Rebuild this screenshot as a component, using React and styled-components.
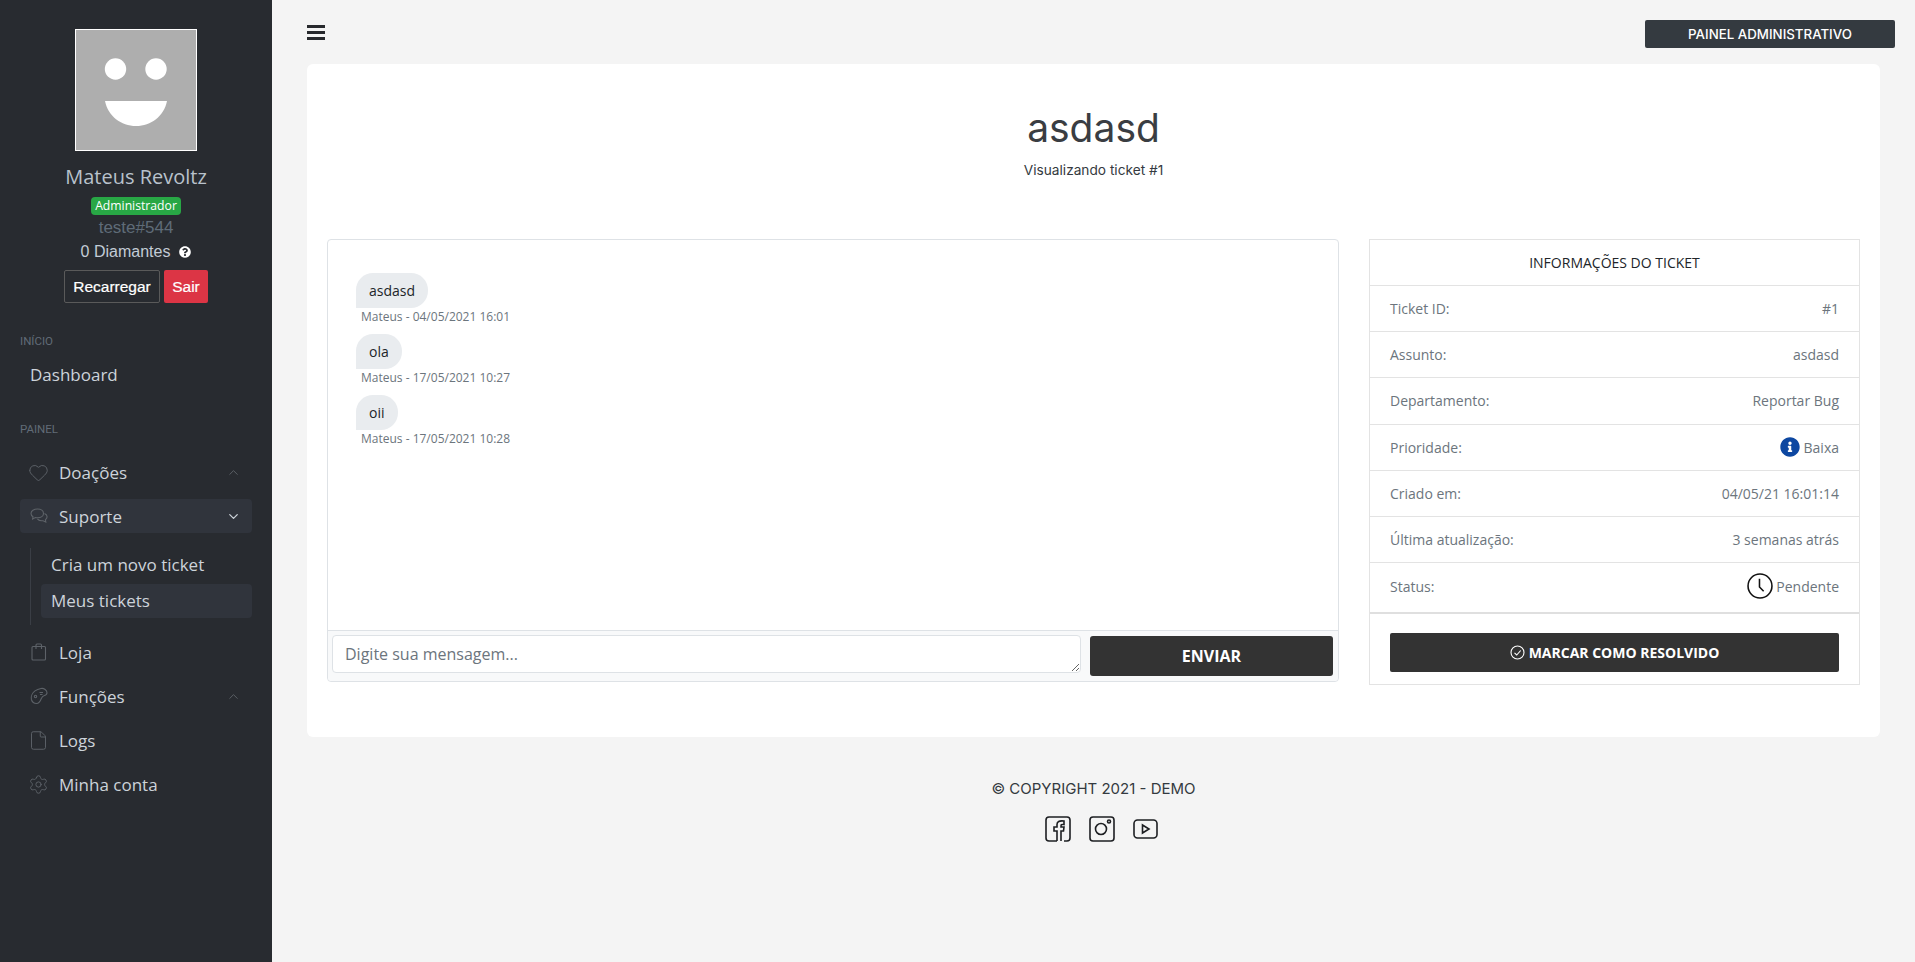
import React from "react"
import styled, { createGlobalStyle } from "styled-components"
import { Heart, File, Settings, ChevronUp, ChevronDown } from "lucide-react"
import { FaInfoCircle, FaQuestionCircle } from "react-icons/fa"

const Global = createGlobalStyle`
    html, body { margin: 0; padding: 0; height: 100%; background: #f4f4f4; overflow: hidden; }
    * { box-sizing: border-box; }
    body { font-family: "Open Sans", sans-serif; }
`;

const Layout = styled.div`
    display: flex;
    height: 962px;
`;

const Sidebar = styled.aside`
    width: 272px;
    flex: none;
    background-color: #282b30;
    padding: 29px 20px 0;
`;

const Profile = styled.div`
    display: flex;
    flex-direction: column;
    align-items: center;
`;

const Avatar = styled.div`
    width: 122px;
    height: 122px;
    background-color: #aeaeae;
    border: 1px solid #fff;
    display: flex;
`;

const Name = styled.div`
    margin-top: 13px;
    height: 26px;
    line-height: 26px;
    font-size: 20px;
    color: #b9c2cc;
`;

const Badge = styled.span`
    margin-top: 7px;
    height: 18px;
    line-height: 18px;
    width: 90px;
    text-align: center;
    background-color: #28a745;
    color: #fff;
    border-radius: 4px;
    font-size: 12.2px;
`;

const Tag = styled.div`
    margin-top: 3px;
    height: 20px;
    line-height: 20px;
    font-family: "Liberation Sans", sans-serif;
    font-size: 17px;
    color: #5f6b78;
`;

const Diamonds = styled.div`
    margin-top: 4px;
    height: 20px;
    display: flex;
    align-items: center;
    gap: 9px;
    font-family: "Liberation Sans", sans-serif;
    font-size: 16px;
    color: #c3ccd6;
`;

const Actions = styled.div`
    margin-top: 8px;
    display: flex;
    gap: 4px;
`;

const ActionButton = styled.button`
    height: 33px;
    padding: 0;
    width: ${p => p.$danger ? "44px" : "96px"};
    background-color: ${p => p.$danger ? "#dc3545" : "transparent"};
    border: ${p => p.$danger ? "none" : "1px solid #5a5a5a"};
    border-radius: 2px;
    color: #fff;
    font-family: "Liberation Sans", sans-serif;
    font-size: 15.500px;
    -webkit-text-stroke: 0.2px #fff;
`;

const Section = styled.div`
    margin-top: ${p => p.$top};
    margin-bottom: ${p => p.$after};
    height: 16px;
    line-height: 16px;
    font-family: Roboto, sans-serif;
    font-size: 11.5px;
    color: #616b77;
`;

const NavRow = styled.div`
    height: 34px;
    margin-top: 10px;
    padding: 0 10px;
    display: flex;
    align-items: center;
    font-size: 17px;
    color: #cdd3da;
    border-radius: 4px;
    background-color: ${p => p.$active ? "#30343c" : "transparent"};
`;

const NavIcon = styled.span`
    width: 29px;
    flex: none;
    display: flex;
    color: #5d6268;
    svg { margin-left: ${p => p.$pull ? "-2px" : "0"}; }
`;

const NavText = styled.span`
    flex: 1;
`;

const NavArrow = styled.span`
    display: flex;
    margin-right: 1px;
    color: ${p => p.$open ? "#cdd3da" : "#5d6268"};
`;

const SubMenu = styled.div`
    margin: 15px 0 0 10px;
    padding-left: 10px;
    height: 77px;
    border-left: 1px solid #3a3e45;
`;

const SubItem = styled.div`
    height: 34px;
    line-height: 34px;
    margin-bottom: 2px;
    padding-left: 10px;
    font-size: 17px;
    color: #cdd3da;
    border-radius: 4px;
    background-color: ${p => p.$active ? "#30343c" : "transparent"};
`;

const Main = styled.main`
    flex: 1;
    min-width: 0;
    padding: 0 20px 0 35px;
`;

const Topbar = styled.div`
    height: 64px;
    padding-top: 20px;
    display: flex;
    justify-content: space-between;
    align-items: flex-start;
`;

const Burger = styled.div`
    width: 18px;
    margin-top: 5px;
    display: flex;
    flex-direction: column;
    gap: 3px;
`;

const BurgerLine = styled.span`
    height: 3px;
    background-color: #27292d;
`;

const AdminButton = styled.button`
    width: 250px;
    height: 28px;
    padding: 0;
    border: none;
    border-radius: 2px;
    background-color: #343a40;
    color: #fff;
    font-family: Inter, sans-serif;
    font-size: 13.300px;
    font-weight: 500;
`;

const Card = styled.section`
    margin-right: 15px;
    padding: 0 20px 52px;
    background-color: #fff;
    border-radius: 6px;
`;

const Header = styled.header`
    height: 175px;
    padding-top: 40px;
    text-align: center;
`;

const Title = styled.h1`
    margin: 0;
    height: 48px;
    line-height: 48px;
    font-family: Inter, sans-serif;
    font-size: 39px;
    font-weight: 400;
    color: #3a3d42;
`;

const Subtitle = styled.div`
    margin-top: 8px;
    font-family: Inter, sans-serif;
    font-size: 13.700px;
    line-height: 20px;
    color: #343a40;
`;

const Columns = styled.div`
    display: flex;
    gap: 30px;
    align-items: flex-start;
`;

const ChatBox = styled.div`
    width: 1012px;
    flex: none;
    height: 443px;
    display: flex;
    flex-direction: column;
    border: 1px solid #dee2e6;
    border-radius: 4px;
`;

const Messages = styled.div`
    flex: 1;
    padding: 33px 28px 0;
`;

const Message = styled.div`
    margin-bottom: 9px;
`;

const Bubble = styled.div`
    display: inline-block;
    height: 35px;
    line-height: 35px;
    padding: 0 13px;
    background-color: #e9ecef;
    border-radius: 17px 17px 17px 0;
    font-size: 14px;
    color: #212529;
`;

const Meta = styled.div`
    margin-top: 1px;
    padding-left: 5px;
    font-size: 12px;
    line-height: 16px;
    color: #6c757d;
`;

const Composer = styled.div`
    height: 51px;
    padding: 4px 5px 4px 4px;
    display: flex;
    gap: 9px;
    background-color: #f8f9fa;
    border-top: 1px solid #dee2e6;
    border-radius: 0 0 4px 4px;
`;

const MessageInput = styled.textarea`
    flex: 1;
    height: 38px;
    padding: 6px 12px;
    border: 1px solid #dee2e6;
    border-radius: 4px;
    background-color: #fff;
    font-family: "Open Sans", sans-serif;
    font-size: 16px;
    line-height: 24px;
    color: #495057;
    &::placeholder { color: #6c757d; opacity: 1; }
`;

const SendButton = styled.button`
    width: 243px;
    height: 40px;
    margin-top: 1px;
    border: none;
    border-radius: 3px;
    background-color: #333;
    color: #fff;
    font-family: "Open Sans", sans-serif;
    font-size: 16px;
    font-weight: 700;
`;

const InfoBox = styled.div`
    flex: 1;
    height: 446px;
    border: 1px solid #e3e3e3;
`;

const InfoHead = styled.div`
    height: 46px;
    line-height: 46px;
    text-align: center;
    font-size: 14px;
    color: #212529;
    border-bottom: 1px solid #e3e3e3;
`;

const InfoRow = styled.div`
    height: ${p => p.$last ? "51px" : "46.200px"};
    padding: ${p => p.$last ? "0 20px 3px" : "0 20px"};
    display: flex;
    justify-content: space-between;
    align-items: center;
    font-size: 14px;
    color: #6c757d;
    border-bottom: ${p => p.$last ? "2px solid #dfdfdf" : "1px solid #e3e3e3"};
`;

const InfoValue = styled.span`
    display: flex;
    align-items: center;
    gap: ${p => p.$gap || "4px"};
`;

const InfoFoot = styled.div`
    padding: 19px 20px 0;
`;

const ResolveButton = styled.button`
    width: 100%;
    height: 39px;
    display: flex;
    align-items: center;
    justify-content: center;
    gap: 4px;
    border: none;
    border-radius: 2px;
    background-color: #333;
    color: #fff;
    font-family: "Open Sans", sans-serif;
    font-size: 14px;
    font-weight: 700;
`;

const Footer = styled.footer`
    margin-right: 15px;
    padding-top: 42px;
    display: flex;
    flex-direction: column;
    align-items: center;
`;

const Copyright = styled.div`
    font-family: Inter, sans-serif;
    font-size: 15px;
    line-height: 20px;
    color: #343a40;
`;

const Socials = styled.div`
    margin-top: 17px;
    margin-left: 15px;
    display: flex;
    align-items: center;
    gap: 18px;
`;

const Face = () => (
    <svg width="120" height="120" viewBox="0 0 120 120">
        <circle cx="39.5" cy="39" r="10.7" fill="#fff" />
        <circle cx="80" cy="39" r="10.7" fill="#fff" />
        <path d="M29 71h62c-3 15-16 25-31 25s-28-10-31-25z" fill="#fff" />
    </svg>
);

const ChatIcon = () => (
    <svg width="18" height="18" viewBox="0 0 18 18" fill="none" stroke="currentColor" strokeWidth="1.1">
        <path d="M7.5 2C4 2 1 3.8 1 6.4c0 1.5 1 2.6 2 3.3L2.6 12l2.8-1.5c.7.1 1.4.2 2.1.2 3.5 0 6-1.9 6-4.3S11 2 7.5 2z" />
        <path d="M14.5 6.5c1.6.7 2.6 1.9 2.6 3.3 0 1.2-.7 2.2-1.7 2.9l.4 2.3-2.8-1.3c-2.2.3-4.4-.4-5.6-1.9" />
    </svg>
);

const BagIcon = () => (
    <svg width="18" height="18" viewBox="0 0 18 18" fill="none" stroke="currentColor" strokeWidth="1.1">
        <rect x="2" y="3.5" width="13.5" height="13.5" rx="1" />
        <path d="M6 6V2a1 1 0 0 1 1-1h3.500a1 1 0 0 1 1 1v4" />
    </svg>
);

const PadIcon = () => (
    <svg width="18" height="18" viewBox="0 0 18 18" fill="none" stroke="currentColor" strokeWidth="1.1">
        <path d="M11 1.500c3-.6 6 1.700 6 4.200 0 1.600-1 2.400-2.600 2.800-1.800.5-2.400 1.200-3.200 3.200-.9 2.500-2 4.800-4.700 4.800-2.600 0-4.500-2-5.100-4C.6 9.500 2.600 5.800 5 3.900 7 2.500 9 1.900 11 1.500z" />
        <path d="M9.500 5.500h3.500M10 7.500h2.500" />
        <circle cx="5.500" cy="9.500" r="1.200" />
    </svg>
);

const ClockIcon = () => (
    <svg width="26" height="26" viewBox="0 0 25 25" fill="none" stroke="#111" strokeWidth="1.5">
        <circle cx="12.500" cy="12.500" r="11.500" />
        <path d="M12 5.500v8l4 4" />
    </svg>
);

const CheckIcon = () => (
    <svg width="15" height="15" viewBox="0 0 15 15" fill="none" stroke="#fff" strokeWidth="1.1">
        <circle cx="7.500" cy="7.500" r="6.500" />
        <path d="M4.500 7.800l2.200 2.200 4-4.500" />
    </svg>
);

const FacebookIcon = () => (
    <svg width="26" height="26" viewBox="0 0 26 26" fill="none" stroke="#1d1f22" strokeWidth="1.600">
        <path d="M12 25H4a3 3 0 0 1-3-3V4a3 3 0 0 1 3-3h18a3 3 0 0 1 3 3v18a3 3 0 0 1-3 3h-3" />
        <path d="M12 25V15H9v-4h3V8.500C12 5.500 14 4.500 19 5v3.500c-3-.3-3 0-3 2.500h3l-.5 4H16v10" />
    </svg>
);

const InstagramIcon = () => (
    <svg width="26" height="26" viewBox="0 0 26 26" fill="none" stroke="#1d1f22" strokeWidth="1.600">
        <rect x="1" y="1" width="24" height="24" rx="3" />
        <circle cx="12" cy="13" r="5.500" />
        <circle cx="20" cy="5.500" r="1.500" />
    </svg>
);

const YoutubeIcon = () => (
    <svg width="25" height="20" viewBox="0 0 25 20" fill="none" stroke="#1d1f22" strokeWidth="1.600">
        <rect x="1" y="1" width="23" height="18" rx="3.500" />
        <path d="M9.500 6v8l6.500-4z" />
    </svg>
);

const MenuItem = ({ icon, label, arrow, active, pull }) => (
    <NavRow $active={active}>
        <NavIcon $pull={pull}>{icon}</NavIcon>
        <NavText>{label}</NavText>
        {arrow === "up" && <NavArrow><ChevronUp size={15} strokeWidth={1.5} /></NavArrow>}
        {arrow === "down" && <NavArrow $open><ChevronDown size={15} strokeWidth={2} /></NavArrow>}
    </NavRow>
);

const messages = [
    { text: "asdasd", meta: "Mateus - 04/05/2021 16:01" },
    { text: "ola", meta: "Mateus - 17/05/2021 10:27" },
    { text: "oii", meta: "Mateus - 17/05/2021 10:28" },
];

const App = () => {
    return (
        <Layout>
            <Global />
            <Sidebar>
                <Profile>
                    <Avatar><Face /></Avatar>
                    <Name>Mateus Revoltz</Name>
                    <Badge>Administrador</Badge>
                    <Tag>teste#544</Tag>
                    <Diamonds>0 Diamantes <FaQuestionCircle size={12} color="#fff" /></Diamonds>
                    <Actions>
                        <ActionButton>Recarregar</ActionButton>
                        <ActionButton $danger>Sair</ActionButton>
                    </Actions>
                </Profile>
                <Section $top="30px" $after="-2px">INÍCIO</Section>
                <NavRow>Dashboard</NavRow>
                <Section $top="30px" $after="18px">PAINEL</Section>
                <MenuItem pull icon={<Heart size={21} strokeWidth={1.1} />} label="Doações" arrow="up" />
                <MenuItem icon={<ChatIcon />} label="Suporte" arrow="down" active />
                <SubMenu>
                    <SubItem>Cria um novo ticket</SubItem>
                    <SubItem $active>Meus tickets</SubItem>
                </SubMenu>
                <MenuItem icon={<BagIcon />} label="Loja" />
                <MenuItem icon={<PadIcon />} label="Funções" arrow="up" />
                <MenuItem pull icon={<File size={21} strokeWidth={1.1} />} label="Logs" />
                <MenuItem pull icon={<Settings size={21} strokeWidth={1.1} />} label="Minha conta" />
            </Sidebar>
            <Main>
                <Topbar>
                    <Burger>
                        <BurgerLine />
                        <BurgerLine />
                        <BurgerLine />
                    </Burger>
                    <AdminButton>PAINEL ADMINISTRATIVO</AdminButton>
                </Topbar>
                <Card>
                    <Header>
                        <Title>asdasd</Title>
                        <Subtitle>Visualizando ticket #1</Subtitle>
                    </Header>
                    <Columns>
                        <ChatBox>
                            <Messages>
                                {messages.map(m => (
                                    <Message key={m.meta}>
                                        <Bubble>{m.text}</Bubble>
                                        <Meta>{m.meta}</Meta>
                                    </Message>
                                ))}
                            </Messages>
                            <Composer>
                                <MessageInput placeholder="Digite sua mensagem..." />
                                <SendButton>ENVIAR</SendButton>
                            </Composer>
                        </ChatBox>
                        <InfoBox>
                            <InfoHead>INFORMAÇÕES DO TICKET</InfoHead>
                            <InfoRow><span>Ticket ID:</span><span>#1</span></InfoRow>
                            <InfoRow><span>Assunto:</span><span>asdasd</span></InfoRow>
                            <InfoRow><span>Departamento:</span><span>Reportar Bug</span></InfoRow>
                            <InfoRow>
                                <span>Prioridade:</span>
                                <InfoValue><FaInfoCircle size={20} color="#0d47a1" />Baixa</InfoValue>
                            </InfoRow>
                            <InfoRow><span>Criado em:</span><span>04/05/21 16:01:14</span></InfoRow>
                            <InfoRow><span>Última atualização:</span><span>3 semanas atrás</span></InfoRow>
                            <InfoRow $last>
                                <span>Status:</span>
                                <InfoValue $gap="3px"><ClockIcon />Pendente</InfoValue>
                            </InfoRow>
                            <InfoFoot>
                                <ResolveButton><CheckIcon />MARCAR COMO RESOLVIDO</ResolveButton>
                            </InfoFoot>
                        </InfoBox>
                    </Columns>
                </Card>
                <Footer>
                    <Copyright>© COPYRIGHT 2021 - DEMO</Copyright>
                    <Socials>
                        <FacebookIcon />
                        <InstagramIcon />
                        <YoutubeIcon />
                    </Socials>
                </Footer>
            </Main>
        </Layout>
    )
}

export default App
